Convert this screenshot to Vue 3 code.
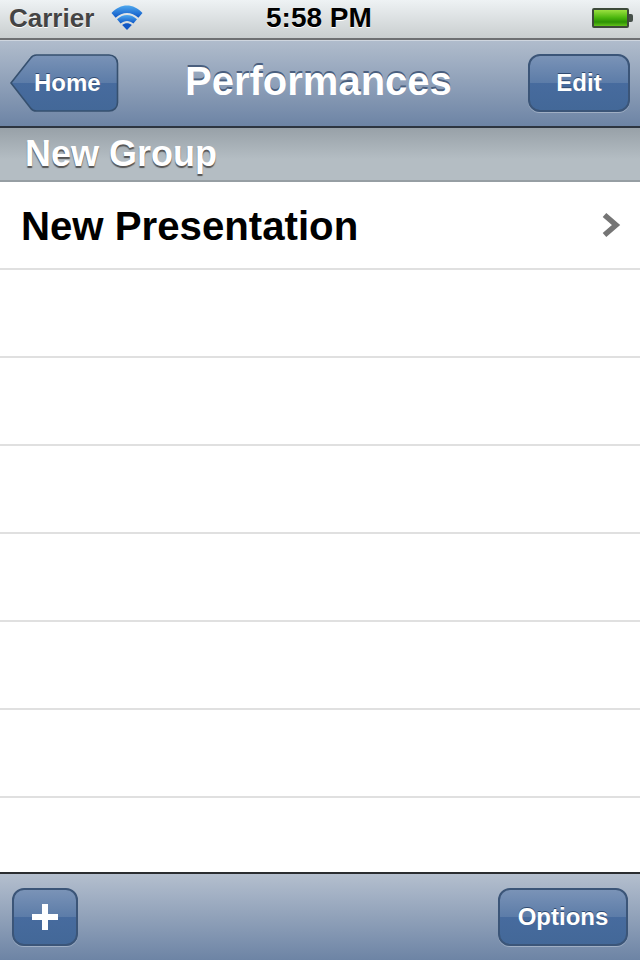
<template>
  <div class="phone">
    <!-- Status bar -->
    <div class="status-bar">
      <div class="status-left">
        <span class="carrier">Carrier</span>
        <svg class="wifi" width="32" height="25" viewBox="0 0 32 25">
          <path d="M0.5 8C9.5 -2 22.5 -2 31.5 8L27.4 12.8C20.5 6.4 11.5 6.4 4.6 12.8Z" fill="url(#wifiBlue)" />
          <path d="M6 14.3C12 8.6 20 8.6 26 14.3L22.4 18.6C18.5 15.2 13.5 15.2 9.6 18.6Z" fill="url(#wifiBlue)" />
          <path d="M11.2 20C14 17.8 18 17.8 20.8 20L16 25Z" fill="#1157c4" />
          <defs>
            <linearGradient id="wifiBlue" x1="0" y1="0" x2="0" y2="1">
              <stop offset="0" stop-color="#4ea8ee" />
              <stop offset="1" stop-color="#0c56c6" />
            </linearGradient>
          </defs>
        </svg>
      </div>
      <span class="time">5:58 PM</span>
      <div class="battery">
        <div class="battery-body"></div>
        <div class="battery-tip"></div>
      </div>
    </div>

    <!-- Nav bar -->
    <div class="nav-bar">
      <button class="back-btn">
        <svg class="back-shape" width="109" height="58" viewBox="0 0 109 58">
          <defs>
            <linearGradient id="backFill" x1="0" y1="0" x2="0" y2="1">
              <stop offset="0" stop-color="#7a93b7" />
              <stop offset="0.5" stop-color="#5c7ca8" />
              <stop offset="0.5" stop-color="#476b9e" />
              <stop offset="1" stop-color="#436898" />
            </linearGradient>
          </defs>
          <path
            d="M1 29L20.5 4.2C21.8 2.2 23.6 1 26.5 1H99C104 1 107.5 4.5 107.5 9.5V48.5C107.5 53.5 104 57 99 57H26.5C23.6 57 21.8 56 20.5 54Z"
            fill="url(#backFill)"
            stroke="#36506f"
            stroke-width="1.6"
          />
        </svg>
        <span class="back-label">Home</span>
      </button>
      <h1 class="title">Performances</h1>
      <button class="bar-btn edit-btn">Edit</button>
    </div>

    <!-- Section header -->
    <div class="section-header">New Group</div>

    <!-- Table -->
    <div class="table">
      <div v-for="(row, i) in rows" :key="i" class="row">
        <span class="row-label">{{ row }}</span>
        <svg v-if="row" class="chevron" width="20" height="26" viewBox="0 0 20 26">
          <path d="M3.5 3L15 13L3.5 23" fill="none" stroke="#757575" stroke-width="5.5" />
        </svg>
      </div>
    </div>

    <!-- Toolbar -->
    <div class="toolbar">
      <button class="bar-btn add-btn">
        <svg width="28" height="28" viewBox="0 0 28 28">
          <path d="M11 1H17V11H27V17H17V27H11V17H1V11H11Z" fill="#fff" />
        </svg>
      </button>
      <button class="bar-btn options-btn">Options</button>
    </div>
  </div>
</template>

<script setup>
const rows = ['New Presentation', '', '', '', '', '', '', '']
</script>

<style>
html,
body {
  margin: 0;
  background: #fff;
}
</style>

<style scoped>
.phone {
  width: 640px;
  height: 960px;
  display: flex;
  flex-direction: column;
  overflow: hidden;
  font-family: "Liberation Sans", Arial, sans-serif;
}

/* Status bar */
.status-bar {
  height: 40px;
  box-sizing: border-box;
  padding: 0 7px 2px 9px;
  display: flex;
  align-items: center;
  justify-content: space-between;
  position: relative;
  background: linear-gradient(#eef2f4, #c9cecf);
  border-bottom: 2px solid #6e7072;
}

.status-left {
  display: flex;
  align-items: center;
  gap: 17px;
}

.carrier {
  font-size: 26px;
  font-weight: 700;
  color: #444;
  text-shadow: 0 1px 0 #fff;
}

.wifi {
  margin-top: -2px;
}

.time {
  position: absolute;
  left: 266px;
  font-size: 28px;
  font-weight: 700;
  color: #000;
  text-shadow: 0 1px 0 #fff;
}

.battery {
  display: flex;
  align-items: center;
}

.battery-body {
  width: 33px;
  height: 16px;
  border: 2px solid #3d4a3a;
  border-radius: 2px;
  background: linear-gradient(#9ae040, #48b40c 50%, #2c9204 75%, #62c21a);
}

.battery-tip {
  width: 4px;
  height: 8px;
  background: #46504a;
  border-radius: 0 2px 2px 0;
}

/* Nav bar */
.nav-bar {
  height: 88px;
  box-sizing: border-box;
  padding: 13px 10px 14px;
  display: flex;
  align-items: flex-start;
  justify-content: space-between;
  position: relative;
  background: linear-gradient(#b0bccc, #6d84a5);
  border-top: 1px solid #cfd6df;
  border-bottom: 2px solid #2d3540;
}

.back-btn {
  position: relative;
  width: 109px;
  height: 58px;
  padding: 0 0 1px 24px;
  border: none;
  background: none;
  display: flex;
  align-items: center;
  font-family: inherit;
}

.back-shape {
  position: absolute;
  left: 0;
  top: 0;
}

.back-label {
  position: relative;
  font-size: 24px;
  font-weight: 700;
  color: #fff;
  text-shadow: 0 -1px 0 #2f4a70;
}

.title {
  position: absolute;
  left: 185px;
  top: 18px;
  margin: 0;
  font-size: 40px;
  font-weight: 700;
  color: #fff;
  text-shadow: 0 -2px 0 #4a5f7e;
}

.bar-btn {
  box-sizing: border-box;
  height: 58px;
  border: 2px solid #3b5578;
  border-radius: 12px;
  background: linear-gradient(#7a93b7, #5c7ca8 50%, #476b9e 50%, #436898);
  box-shadow: 0 1px 0 rgba(255, 255, 255, 0.3);
  font-family: inherit;
  font-size: 24px;
  font-weight: 700;
  color: #fff;
  text-shadow: 0 -1px 0 #2f4a70;
  padding: 0;
  display: flex;
  align-items: center;
  justify-content: center;
}

.edit-btn {
  width: 102px;
}

/* Section header */
.section-header {
  height: 54px;
  box-sizing: border-box;
  padding: 0 0 0 25px;
  display: flex;
  align-items: center;
  background: linear-gradient(#98a1a8, #b4bdc3 60%);
  border-bottom: 2px solid #969ea3;
  font-size: 36px;
  font-weight: 700;
  color: #fff;
  text-shadow: 0 2px 1px #555;
}

/* Table */
.table {
  flex: 1;
  background: #fff;
  overflow: hidden;
}

.row {
  height: 88px;
  box-sizing: border-box;
  padding: 0 19px 0 21px;
  display: flex;
  align-items: center;
  justify-content: space-between;
  border-bottom: 2px solid #e0e0e0;
}

.row-label {
  font-size: 40.2px;
  font-weight: 700;
  color: #000;
  padding-top: 3px;
}

/* Toolbar */
.toolbar {
  height: 88px;
  box-sizing: border-box;
  padding: 0 12px 0 12px;
  display: flex;
  align-items: center;
  justify-content: space-between;
  background: linear-gradient(#b4bfce, #6d84a5);
  border-top: 2px solid #2a2d30;
}

.add-btn {
  width: 66px;
}

.options-btn {
  width: 130px;
}
</style>
